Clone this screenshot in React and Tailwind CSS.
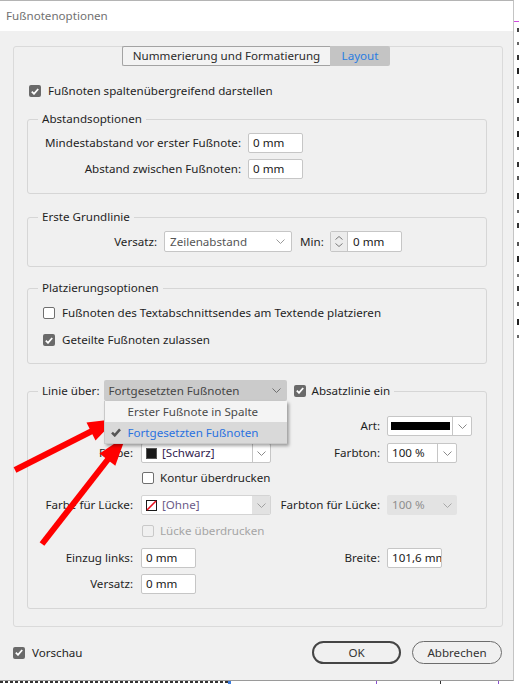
import React from "react";

const FONT = { fontFamily: '"Noto Sans", "Open Sans", sans-serif' };

function Chevron({ color = "#808080" }) {
  return (
    <svg width="9" height="5" viewBox="0 0 9 5" className="shrink-0">
      <polyline points="0.5,0.5 4.5,4.5 8.5,0.5" fill="none" stroke={color} strokeWidth="1" />
    </svg>
  );
}

function Check({ color = "#ffffff", w = 8, h = 7, sw = 1.8 }) {
  return (
    <svg width={w} height={h} viewBox="0 0 8 7">
      <polyline points="0.8,3.6 3,5.8 7.2,1" fill="none" stroke={color} strokeWidth={sw} />
    </svg>
  );
}

function Checkbox({ checked, disabled }) {
  if (checked) {
    return (
      <span className="flex h-[12px] w-[12px] shrink-0 items-center justify-center rounded-[2px] bg-[#6a6a6a]">
        <Check />
      </span>
    );
  }
  return (
    <span
      className={
        disabled
          ? "block h-[12px] w-[12px] shrink-0 rounded-[2px] border border-[#c9c9c9] bg-[#f0f0f0]"
          : "block h-[12px] w-[12px] shrink-0 rounded-[2px] border border-[#6f6f6f] bg-white"
      }
    />
  );
}

function Input({ value, w = "w-[55px]" }) {
  return (
    <div className={`${w} flex h-[20px] items-center overflow-hidden whitespace-nowrap rounded-[2px] border border-[#c6c6c6] bg-white pl-[4px] text-[#1a1a1a]`}>
      {value}
    </div>
  );
}

function Group({ title, children, className = "" }) {
  return (
    <div className={`ml-[13px] w-[460px] rounded-[3px] border border-[#d6d6d6] ${className}`}>
      <div className="-mt-[9px] ml-[10px] w-fit bg-[#f0f0f0] px-[4px] leading-[16px] text-[#1f1f1f]">{title}</div>
      {children}
    </div>
  );
}

export default function App() {
  return (
    <div className="relative flex h-[684px] w-[519px] flex-col overflow-hidden bg-white text-[11.6px] leading-[16px]" style={FONT}>
      <div className="flex h-[681px]">
        {/* Dialog window */}
        <div className="flex h-[681px] w-[514px] flex-col border-t border-b border-r border-t-[#b4b4b4] border-b-[#9a9a9a] border-r-[#c4c4c4]">
          {/* Title bar */}
          <div className="flex h-[30px] items-center bg-white pl-[6px] text-[#717171]">Fußnotenoptionen</div>

          {/* Body */}
          <div className="flex flex-1 flex-col bg-[#f0f0f0] pl-[13px] pt-[15px]">
            {/* Outer box */}
            <div className="w-[490px] rounded-[3px] border border-[#dadada] pb-[17px]">
              {/* Tabs */}
              <div className="-mt-[1px] ml-[108px] flex h-[20px]">
                <div className="flex w-[208px] items-center justify-center rounded-l-[2px] border border-r-0 border-[#a3a3a3] bg-[#f3f3f3] text-[#2b2b2b]">
                  Nummerierung und Formatierung
                </div>
                <div className="flex w-[60px] items-center justify-center rounded-r-[2px] bg-[#c4c4c4] text-[#2a7de1]">
                  Layout
                </div>
              </div>

              {/* Top checkbox */}
              <div className="ml-[15px] mt-[17px] flex h-[16px] items-center gap-[7px] text-[#1f1f1f]">
                <Checkbox checked />
                <span>Fußnoten spaltenübergreifend darstellen</span>
              </div>

              {/* Abstandsoptionen */}
              <Group title="Abstandsoptionen" className="mt-[20px] pb-[14px]">
                <div className="mt-[6px] flex items-center gap-[7px]">
                  <div className="w-[213px] text-right text-[#1f1f1f]">Mindestabstand vor erster Fußnote:</div>
                  <Input value="0 mm" />
                </div>
                <div className="mt-[6px] flex items-center gap-[7px]">
                  <div className="w-[213px] text-right text-[#1f1f1f]">Abstand zwischen Fußnoten:</div>
                  <Input value="0 mm" />
                </div>
              </Group>

              {/* Erste Grundlinie */}
              <Group title="Erste Grundlinie" className="mt-[23px] pb-[14px]">
                <div className="mt-[6px] flex items-center">
                  <div className="w-[129px] text-right text-[#1f1f1f]">Versatz:</div>
                  <div className="ml-[7px] flex h-[21px] w-[128px] items-center justify-between rounded-[2px] border border-[#c6c6c6] bg-white pl-[5px] pr-[6px] text-[#555555]">
                    <span>Zeilenabstand</span>
                    <Chevron color="#9a9a9a" />
                  </div>
                  <div className="ml-[8px] w-[30px] text-[#1f1f1f]">Min:</div>
                  <div className="flex h-[21px] w-[72px] items-center rounded-[2px] border border-[#c6c6c6] bg-white">
                    <div className="flex h-full w-[17px] flex-col items-center justify-center gap-[3px] border-r border-[#c6c6c6] bg-[#ececec]">
                      <svg width="8" height="4" viewBox="0 0 8 4"><polyline points="0.5,3.5 4,0.5 7.5,3.5" fill="none" stroke="#7a7a7a" strokeWidth="1" /></svg>
                      <svg width="8" height="4" viewBox="0 0 8 4"><polyline points="0.5,0.5 4,3.5 7.5,0.5" fill="none" stroke="#7a7a7a" strokeWidth="1" /></svg>
                    </div>
                    <span className="pl-[5px] text-[#1a1a1a]">0 mm</span>
                  </div>
                </div>
              </Group>

              {/* Platzierungsoptionen */}
              <Group title="Platzierungsoptionen" className="mt-[21px] pb-[15px]">
                <div className="ml-[15px] mt-[9px] flex h-[16px] items-center gap-[7px] text-[#1f1f1f]">
                  <Checkbox />
                  <span>Fußnoten des Textabschnittsendes am Textende platzieren</span>
                </div>
                <div className="ml-[15px] mt-[11px] flex h-[16px] items-center gap-[7px] text-[#1f1f1f]">
                  <Checkbox checked />
                  <span>Geteilte Fußnoten zulassen</span>
                </div>
              </Group>

              {/* Linie über */}
              <div className="ml-[13px] mt-[27px] w-[460px] rounded-[3px] border border-[#d6d6d6] pb-[14px]">
                <div className="-mt-[12px] ml-[10px] flex h-[21px] w-fit items-center bg-[#f0f0f0] px-[4px] text-[#1f1f1f]">
                  <span>Linie über:</span>
                  <div className="relative ml-[4px]">
                    <div className="flex h-[21px] w-[183px] items-center justify-between rounded-[2px] bg-[#cbcbcb] pl-[5px] pr-[6px] text-[#454545]">
                      <span>Fortgesetzten Fußnoten</span>
                      <Chevron color="#6f6f6f" />
                    </div>
                    {/* Open menu */}
                    <div className="absolute left-0 top-[21px] z-10 w-[183px] border-b border-l border-[#c9c9c9] bg-[#f4f4f4] shadow-[2px_2px_3px_rgba(0,0,0,0.35)]">
                      <div className="flex h-[21px] items-center pl-[23px] text-[#4a4a4a]">Erster Fußnote in Spalte</div>
                      <div className="flex h-[21px] items-center bg-[#d9d9d9] pl-[6px] text-[#2a72e0]">
                        <span className="flex w-[17px] items-center">
                          <Check color="#555555" w={10} h={9} sw={2} />
                        </span>
                        <span>Fortgesetzten Fußnoten</span>
                      </div>
                    </div>
                  </div>
                  <span className="ml-[7px]"><Checkbox checked /></span>
                  <span className="ml-[6px]">Absatzlinie ein</span>
                </div>

                {/* Art row */}
                <div className="mt-[15px] flex h-[20px] items-center">
                  <div className="w-[243px]" />
                  <div className="w-[109px] text-right text-[#1f1f1f]">Art:</div>
                  <div className="ml-[7px] flex h-[20px] w-[85px] items-center rounded-[2px] border border-[#c6c6c6] bg-white">
                    <div className="flex flex-1 items-center pl-[3px]">
                      <div className="h-[8px] w-[59px] bg-black" />
                    </div>
                    <div className="flex h-full w-[19px] items-center justify-center border-l border-[#c6c6c6]">
                      <Chevron color="#8a8a8a" />
                    </div>
                  </div>
                </div>

                {/* Farbe row */}
                <div className="mt-[7px] flex h-[20px] items-center">
                  <div className="w-[105px] text-right text-[#1f1f1f]">Farbe:</div>
                  <div className="ml-[8px] flex h-[20px] w-[130px] items-center rounded-[2px] border border-[#c6c6c6] bg-white">
                    <div className="flex flex-1 items-center gap-[5px] pl-[4px] text-[#33244f]">
                      <span className="block h-[11px] w-[11px] border border-[#555] bg-[#1a1a1a]" />
                      <span>[Schwarz]</span>
                    </div>
                    <div className="flex h-full w-[18px] items-center justify-center border-l border-[#c6c6c6]">
                      <Chevron color="#8a8a8a" />
                    </div>
                  </div>
                  <div className="w-[109px] text-right text-[#1f1f1f]">Farbton:</div>
                  <div className="ml-[7px] flex h-[20px] w-[70px] items-center rounded-[2px] border border-[#c6c6c6] bg-white">
                    <div className="flex-1 pl-[4px] text-[#1a1a1a]">100 %</div>
                    <div className="flex h-full w-[19px] items-center justify-center border-l border-[#c6c6c6]">
                      <Chevron color="#8a8a8a" />
                    </div>
                  </div>
                </div>

                {/* Kontur überdrucken */}
                <div className="ml-[114px] mt-[7px] flex h-[16px] items-center gap-[6px] text-[#1f1f1f]">
                  <Checkbox />
                  <span>Kontur überdrucken</span>
                </div>

                {/* Farbe für Lücke row */}
                <div className="mt-[9px] flex h-[20px] items-center">
                  <div className="w-[105px] whitespace-nowrap text-right text-[#1f1f1f]">Farbe für Lücke:</div>
                  <div className="ml-[8px] flex h-[20px] w-[130px] items-center overflow-hidden rounded-[2px] border border-[#d4d4d4] bg-white">
                    <div className="flex flex-1 items-center gap-[5px] pl-[4px] text-[#6b5b88]">
                      <svg width="11" height="11" viewBox="0 0 11 11" className="shrink-0">
                        <rect x="0.5" y="0.5" width="10" height="10" fill="#ffffff" stroke="#1a1a1a" strokeWidth="1" />
                        <line x1="1" y1="10" x2="10" y2="1" stroke="#e8101e" strokeWidth="1.6" />
                      </svg>
                      <span>[Ohne]</span>
                    </div>
                    <div className="flex h-full w-[18px] items-center justify-center bg-[#e2e2e2]">
                      <Chevron color="#a0a0a0" />
                    </div>
                  </div>
                  <div className="w-[109px] whitespace-nowrap text-right text-[#1f1f1f]">Farbton für Lücke:</div>
                  <div className="ml-[7px] flex h-[20px] w-[70px] items-center rounded-[2px] bg-[#e3e3e3]">
                    <div className="flex-1 pl-[5px] text-[#8e8e8e]">100 %</div>
                    <div className="flex h-full w-[19px] items-center justify-center">
                      <Chevron color="#a8a8a8" />
                    </div>
                  </div>
                </div>

                {/* Lücke überdrucken */}
                <div className="ml-[114px] mt-[8px] flex h-[16px] items-center gap-[6px] text-[#a5a5a5]">
                  <Checkbox disabled />
                  <span>Lücke überdrucken</span>
                </div>

                {/* Einzug links / Breite */}
                <div className="mt-[9px] flex h-[20px] items-center">
                  <div className="w-[105px] text-right text-[#1f1f1f]">Einzug links:</div>
                  <div className="ml-[8px] w-[130px]">
                    <Input value="0 mm" />
                  </div>
                  <div className="w-[109px] text-right text-[#1f1f1f]">Breite:</div>
                  <div className="ml-[7px]">
                    <Input value="101,6 mm" />
                  </div>
                </div>

                {/* Versatz */}
                <div className="mt-[6px] flex h-[20px] items-center">
                  <div className="w-[105px] text-right text-[#1f1f1f]">Versatz:</div>
                  <div className="ml-[8px]">
                    <Input value="0 mm" />
                  </div>
                </div>
              </div>
            </div>

            {/* Bottom row */}
            <div className="mt-[14px] flex h-[23px] items-center">
              <div className="flex items-center gap-[7px] text-[#1f1f1f]">
                <Checkbox checked />
                <span>Vorschau</span>
              </div>
              <div className="ml-auto mr-[11px] flex gap-[11px]">
                <div className="flex h-[23px] w-[89px] items-center justify-center rounded-full border-2 border-[#454545] text-[#333333]">OK</div>
                <div className="flex h-[23px] w-[90px] items-center justify-center rounded-full border border-[#6c6c6c] text-[#333333]">Abbrechen</div>
              </div>
            </div>
          </div>
        </div>

        {/* Background document strip on the right */}
        <div className="flex w-[5px] flex-col bg-white">
          <div className="mt-[21px] h-[1px] w-[5px] bg-[#d14be0]" />
          <div className="ml-[3px] mt-[6px] h-[4px] w-[2px] bg-[#444]" />
          <div className="ml-[3px] mt-[10px] h-[3px] w-[2px] bg-[#666]" />
          <div className="ml-[3px] mt-[10px] h-[5px] w-[2px] bg-[#333]" />
          <div className="ml-[3px] mt-[8px] h-[6px] w-[2px] bg-[#222]" />
          <div className="ml-[3px] mt-[12px] h-[3px] w-[2px] bg-[#888]" />
          <div className="ml-[3px] mt-[9px] h-[5px] w-[2px] bg-[#333]" />
          <div className="ml-[3px] mt-[14px] h-[4px] w-[2px] bg-[#555]" />
          <div className="ml-[3px] mt-[10px] h-[6px] w-[2px] bg-[#222]" />
          <div className="ml-[3px] mt-[10px] h-[3px] w-[2px] bg-[#777]" />
          <div className="ml-[3px] mt-[12px] h-[5px] w-[2px] bg-[#333]" />
          <div className="ml-[3px] mt-[9px] h-[4px] w-[2px] bg-[#555]" />
          <div className="ml-[3px] mt-[13px] h-[6px] w-[2px] bg-[#222]" />
          <div className="ml-[3px] mt-[11px] h-[3px] w-[2px] bg-[#666]" />
          <div className="ml-[3px] mt-[10px] h-[5px] w-[2px] bg-[#333]" />
          <div className="ml-[3px] mt-[14px] h-[4px] w-[2px] bg-[#555]" />
          <div className="ml-[3px] mt-[10px] h-[6px] w-[2px] bg-[#222]" />
          <div className="ml-[3px] mt-[12px] h-[3px] w-[2px] bg-[#777]" />
          <div className="ml-[3px] mt-[9px] h-[5px] w-[2px] bg-[#333]" />
          <div className="ml-[3px] mt-[11px] h-[4px] w-[2px] bg-[#555]" />
          <div className="ml-[3px] mt-[13px] h-[6px] w-[2px] bg-[#222]" />
          <div className="ml-[3px] mt-[10px] h-[3px] w-[2px] bg-[#666]" />
        </div>
      </div>

      {/* Background document strip at the bottom */}
      <div className="flex h-[3px] items-start">
        <div className="h-[2px] w-[228px] bg-[repeating-linear-gradient(90deg,#333_0px,#333_3px,#fff_3px,#fff_5px)]" />
        <div className="h-[3px] w-[3px] bg-[#3b7de0]" />
        <div className="ml-[145px] h-[3px] w-[1px] bg-[#8a4fd0]" />
        <div className="ml-[63px] h-[3px] w-[1px] bg-[#333]" />
        <div className="ml-[57px] h-[3px] w-[1px] bg-[#8a4fd0]" />
      </div>

      {/* Red annotation arrows */}
      <svg className="pointer-events-none absolute left-0 top-0" width="519" height="684" viewBox="0 0 519 684">
        <line x1="15" y1="470" x2="93" y2="430.5" stroke="#ff0000" strokeWidth="6" />
        <polygon points="116,419 95.5,440.4 86.5,422.6" fill="#ff0000" />
        <line x1="42" y1="544" x2="109" y2="458" stroke="#ff0000" strokeWidth="6" />
        <polygon points="126,436 115.3,465.8 99.5,453.4" fill="#ff0000" />
      </svg>
    </div>
  );
}
